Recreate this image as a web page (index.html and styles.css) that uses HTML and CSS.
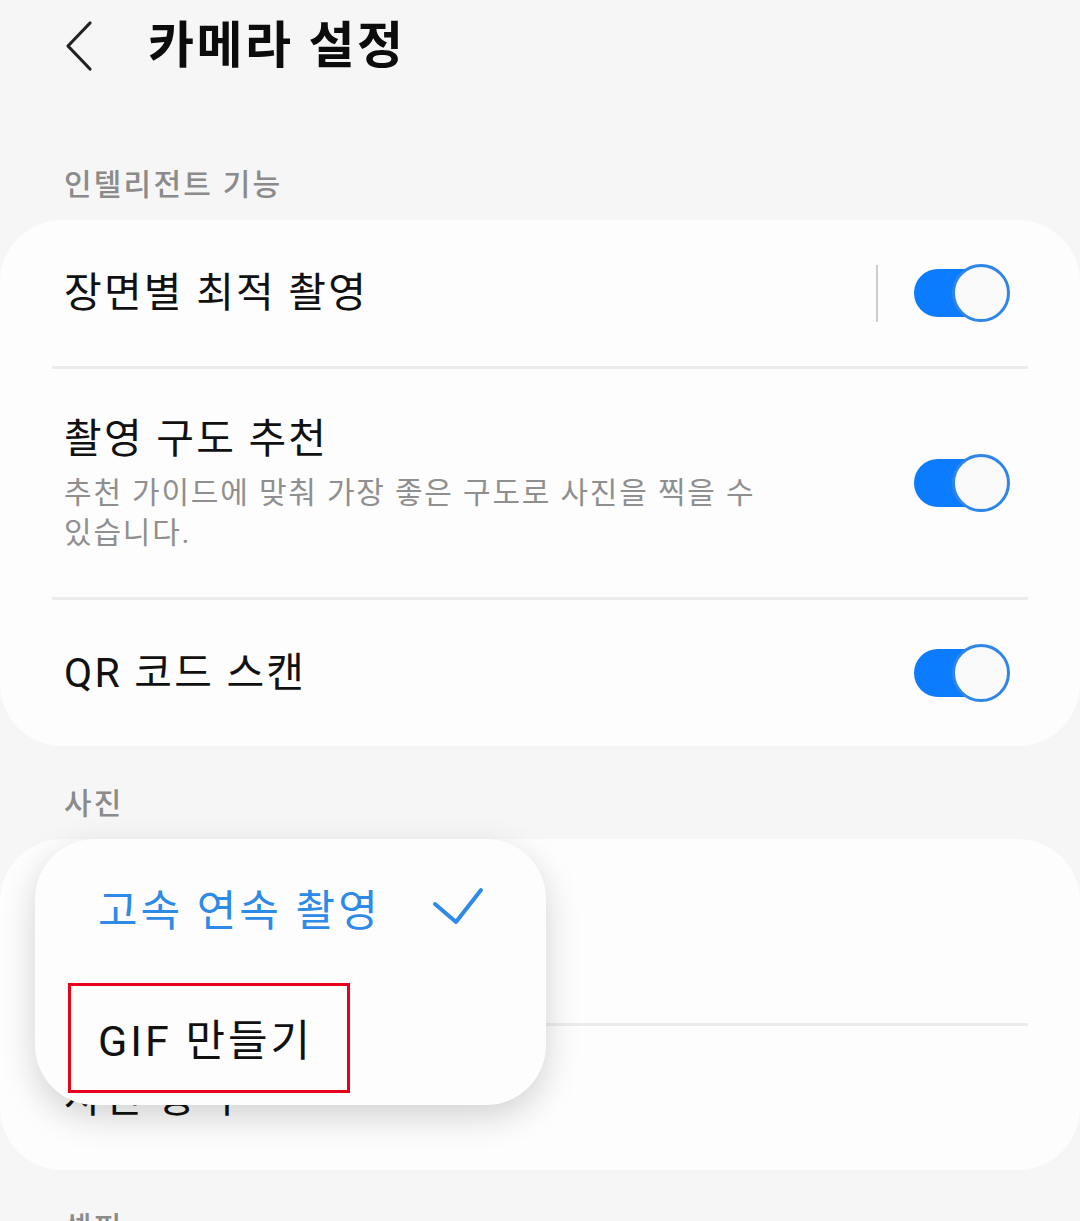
FILE: index.html
```html
<!DOCTYPE html>
<html lang="ko">
<head>
  <meta charset="UTF-8">
  <title>카메라 설정</title>
  <link rel="stylesheet" href="styles.css">
</head>
<body>
  <header class="top-bar">
    <svg class="back" width="30" height="52" viewBox="0 0 30 52">
      <path d="M25 3 L3 26 L25 49" fill="none" stroke="#222" stroke-width="3.2" stroke-linecap="round" stroke-linejoin="round"/>
    </svg>
    <h1 class="page-title">카메라 설정</h1>
  </header>

  <div class="section-label first">인텔리전트 기능</div>
  <div class="card">
    <div class="row">
      <div class="row-text">
        <div class="row-title">장면별 최적 촬영</div>
      </div>
      <span class="vbar"></span>
      <span class="switch"><span class="track"></span><span class="knob"></span></span>
    </div>
    <div class="divider"></div>
    <div class="row">
      <div class="row-text">
        <div class="row-title">촬영 구도 추천</div>
        <div class="row-sub">추천 가이드에 맞춰 가장 좋은 구도로 사진을 찍을 수 있습니다.</div>
      </div>
      <span class="switch"><span class="track"></span><span class="knob"></span></span>
    </div>
    <div class="divider"></div>
    <div class="row">
      <div class="row-text">
        <div class="row-title">QR 코드 스캔</div>
      </div>
      <span class="switch"><span class="track"></span><span class="knob"></span></span>
    </div>
  </div>

  <div class="section-label">사진</div>
  <div class="card popup-host">
    <div class="row">
      <div class="row-text">
        <div class="row-title">셔터 버튼 밀기</div>
        <div class="row-sub blue">고속 연속 촬영</div>
      </div>
    </div>
    <div class="divider"></div>
    <div class="row">
      <div class="row-text">
        <div class="row-title">사진 형식</div>
      </div>
    </div>

    <div class="popup">
      <div class="popup-item selected">
        <span>고속 연속 촬영</span>
        <svg class="check" width="54" height="40" viewBox="0 0 54 40">
          <path d="M4 17 L25 35 L50 3" fill="none" stroke="#2d8ae6" stroke-width="4" stroke-linecap="round" stroke-linejoin="round"/>
        </svg>
      </div>
      <div class="popup-item">
        <span>GIF 만들기</span>
      </div>
      <div class="highlight"></div>
    </div>
  </div>

  <div class="section-label">셀피</div>
</body>
</html>
```

FILE: styles.css
```css
body {
  margin: 0;
  background: #f6f6f6;
  font-family: Roboto, "Noto Sans CJK KR", sans-serif;
  color: #111;
  overflow: hidden;
}

.top-bar {
  height: 92px;
  display: flex;
  align-items: center;
  padding-left: 65px;
}
.back {
  display: block;
}
.page-title {
  margin: 0 0 0 53px;
  font-size: 50px;
  font-weight: 700;
  line-height: 60px;
  letter-spacing: 2.5px;
  color: #0c0c0c;
}

.section-label {
  height: 40px;
  margin: 38px 0 15px;
  padding-left: 64px;
  font-size: 30px;
  line-height: 40px;
  font-weight: 500;
  letter-spacing: 2.2px;
  color: #8b8b8b;
}
.section-label.first {
  margin-top: 73px;
}

.card {
  background: #fdfdfd;
  border-radius: 62px;
}
.popup-host {
  position: relative;
}

.row {
  display: flex;
  align-items: center;
  padding: 44px 70px 44px 64px;
}
.popup-host .row {
  padding-top: 46px;
  padding-bottom: 46px;
}
.row-text {
  flex: 1;
}
.row-title {
  height: 52px;
  font-size: 41px;
  line-height: 52px;
  letter-spacing: 2.2px;
  color: #111;
}
.row-sub {
  max-width: 720px;
  margin-top: 8px;
  font-size: 30px;
  line-height: 40px;
  letter-spacing: 1.8px;
  word-break: keep-all;
  color: #8f8f8f;
}
.row-sub.blue {
  margin-top: 0;
  color: #2d8ae6;
}

.divider {
  height: 3px;
  margin: 0 52px;
  background: #ececec;
}

.vbar {
  width: 2px;
  height: 57px;
  margin-right: 36px;
  background: #cdcdcd;
}

.switch {
  position: relative;
  width: 96px;
  height: 58px;
}
.track {
  position: absolute;
  left: 0;
  top: 5px;
  width: 80px;
  height: 48px;
  border-radius: 24px;
  background: #0b7bff;
}
.knob {
  position: absolute;
  right: 0;
  top: 0;
  width: 52px;
  height: 52px;
  border: 3px solid #2f86e6;
  border-radius: 50%;
  background: #fafafa;
}

.popup {
  position: absolute;
  left: 35px;
  top: 0;
  width: 511px;
  height: 266px;
  padding: 3px 0;
  box-sizing: border-box;
  background: #fdfdfd;
  border-radius: 60px;
  box-shadow: 0 12px 34px rgba(0, 0, 0, 0.17);
}
.popup-item {
  height: 130px;
  display: flex;
  align-items: center;
  padding-left: 63px;
  font-size: 43px;
  letter-spacing: 3px;
  color: #111;
}
.popup-item.selected {
  color: #2d8ae6;
}
.check {
  margin-left: 50px;
}
.highlight {
  position: absolute;
  left: 33px;
  top: 144px;
  width: 276px;
  height: 104px;
  border: 3px solid #e8001c;
}
```
